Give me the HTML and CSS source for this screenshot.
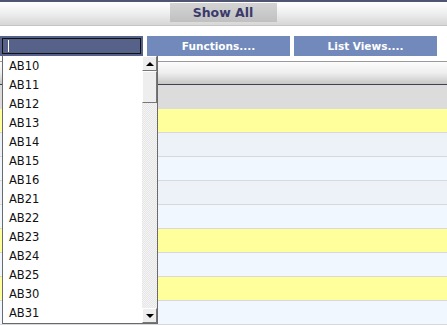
FILE: index.html
```html
<!DOCTYPE html>
<html lang="en">
<head>
    <meta charset="UTF-8">
    <title>List</title>
    <link rel="stylesheet" href="styles.css">
</head>
<body>
    <div class="topline"></div>
    <div class="header">
        <button class="showall">Show All</button>
    </div>

    <div class="toolbar">
        <div class="searchbox"><div class="search"><span class="caret"></span></div></div>
        <button class="tbtn">Functions....</button>
        <button class="tbtn">List Views....</button>
    </div>

    <div class="grid">
        <div class="ghead"></div>
        <div class="grow gray"></div>
        <div class="grow yellow"></div>
        <div class="grow alt"></div>
        <div class="grow plain"></div>
        <div class="grow alt"></div>
        <div class="grow plain"></div>
        <div class="grow yellow"></div>
        <div class="grow plain"></div>
        <div class="grow yellow"></div>
        <div class="grow plain"></div>
    </div>

    <!-- dropdown list that opens over the grid -->
    <div class="dropdown">
        <ul class="items">
            <li>AB10</li>
            <li>AB11</li>
            <li>AB12</li>
            <li>AB13</li>
            <li>AB14</li>
            <li>AB15</li>
            <li>AB16</li>
            <li>AB21</li>
            <li>AB22</li>
            <li>AB23</li>
            <li>AB24</li>
            <li>AB25</li>
            <li>AB30</li>
            <li>AB31</li>
        </ul>
        <div class="scroll">
            <div class="arrow"><span class="tri up"></span></div>
            <div class="thumb"></div>
            <div class="track"></div>
            <div class="arrow"><span class="tri down"></span></div>
        </div>
    </div>
</body>
</html>
```

FILE: styles.css
```css
body
{
    margin: 0;
    background: #ffffff;
    font-family: "DejaVu Sans", Verdana, sans-serif;
    position: relative;
    height: 325px;
    overflow: hidden;
}

.topline
{
    height: 2px;
    background: #4f5572;
}

.header
{
    height: 22px;
    background: linear-gradient(180deg, #ffffff, #f0f0f0 45%, #d6d6d6);
    border-bottom: 1px solid #c4c4c4;
    display: flex;
    justify-content: center;
    padding-top: 1px;
}

.showall
{
    width: 107px;
    height: 19px;
    margin-left: -1px;
    border: none;
    background: linear-gradient(180deg, #d4d4d4, #c0c0c0);
    color: #3b3a6c;
    font-family: "DejaVu Sans", Verdana, sans-serif;
    font-weight: bold;
    font-size: 12.5px;
    padding: 0;
}

.toolbar
{
    display: flex;
    gap: 4px;
    margin-top: 10px;
    height: 20px;
}

.searchbox
{
    width: 143px;
    background: #56628a;
    padding: 2px;
    box-sizing: border-box;
}

.search
{
    height: 100%;
    box-sizing: border-box;
    border: 1px solid #111111;
    background: #56628a;
    padding: 1px 0 1px 5px;
    display: flex;
}

.caret
{
    width: 1px;
    background: #ffffff;
}

.tbtn
{
    width: 143px;
    border: none;
    background: #7289bb;
    color: #ffffff;
    font-family: "DejaVu Sans", Verdana, sans-serif;
    font-weight: bold;
    font-size: 10.5px;
    padding: 0;
}

.grid
{
    margin-top: 5px;
}

.ghead
{
    height: 22px;
    border-top: 1px solid #9a9a9a;
    border-bottom: 1px solid #3e4250;
    background: linear-gradient(180deg, #fcfcfc, #eeeeee 50%, #c6c6c6);
}

.grow
{
    height: 23px;
    border-bottom: 1px solid #d6d8dc;
}

.gray { background: #dcdcdc; border-bottom: none; height: 24px; }
.yellow { background: #ffff9c; }
.alt { background: #ecf2f8; }
.plain { background: #f1f7fe; }

.dropdown
{
    position: absolute;
    left: 2px;
    top: 56px;
    width: 156px;
    height: 268px;
    box-sizing: border-box;
    border: 1px solid #6a6a6a;
    border-top: none;
    background: #ffffff;
    display: flex;
}

.items
{
    list-style: none;
    margin: 0;
    padding: 1px 0 0 0;
    flex: 1;
}

.items li
{
    height: 19px;
    line-height: 19px;
    padding-left: 6px;
    font-size: 11.5px;
    color: #111111;
}

.scroll
{
    width: 15px;
    display: flex;
    flex-direction: column;
    background-color: #f4f4f4;
    background-image:
        linear-gradient(45deg, #e6e6e6 25%, transparent 25%, transparent 75%, #e6e6e6 75%),
        linear-gradient(45deg, #e6e6e6 25%, transparent 25%, transparent 75%, #e6e6e6 75%);
    background-size: 2px 2px;
    background-position: 0 0, 1px 1px;
}

.arrow
{
    height: 15px;
    background: #eeeeee;
    border: 1px solid #ffffff;
    border-right-color: #777777;
    border-bottom-color: #777777;
    box-sizing: border-box;
    display: flex;
    align-items: center;
    justify-content: center;
}

.thumb
{
    height: 32px;
    background: #eeeeee;
    border: 1px solid #ffffff;
    border-right-color: #777777;
    border-bottom-color: #777777;
    box-sizing: border-box;
}

.track { flex: 1; }

.tri
{
    width: 0;
    height: 0;
    border-left: 4px solid transparent;
    border-right: 4px solid transparent;
}

.tri.up { border-bottom: 4px solid #000000; }
.tri.down { border-top: 4px solid #000000; }
```
